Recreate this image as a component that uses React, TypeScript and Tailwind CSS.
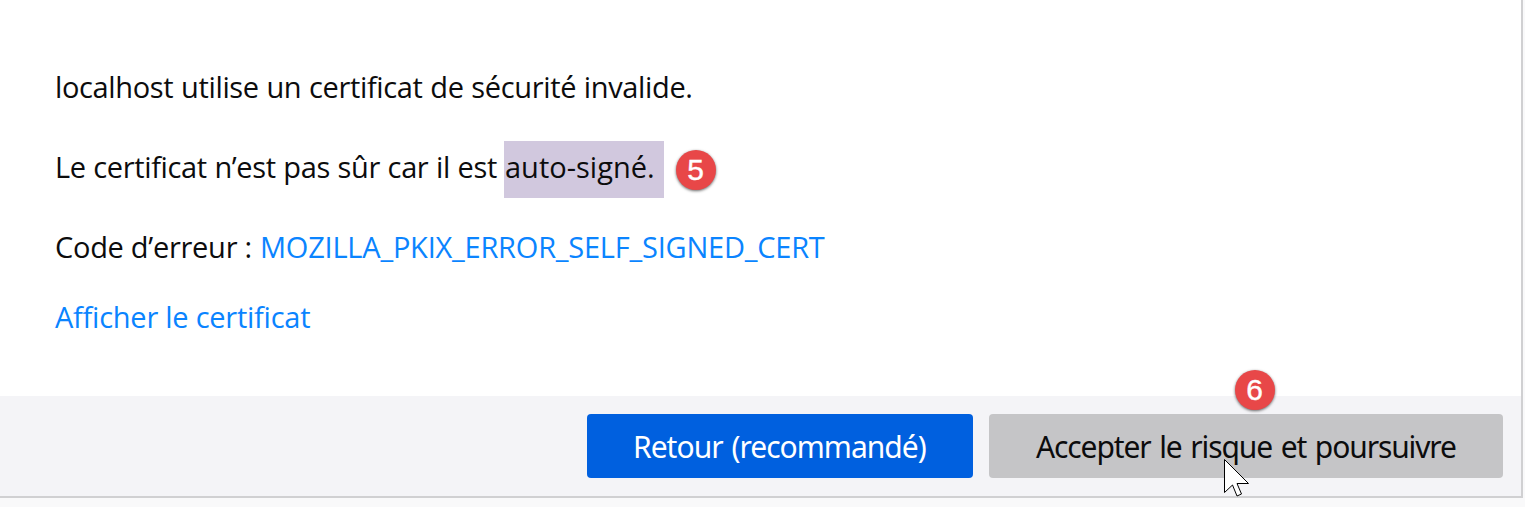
import type { ReactNode } from "react";

function Badge({ children, className }: { children: ReactNode; className: string }) {
  return (
    <span
      className={`absolute flex size-10 items-center justify-center rounded-full bg-[#e84748] pr-px font-['Liberation_Sans',sans-serif] text-[30px] leading-none tracking-normal text-white shadow-[0_1px_3px_rgba(0,0,0,0.6)] [-webkit-text-stroke:0.4px_white] ${className}`}
    >
      {children}
    </span>
  );
}

function Pointer() {
  return (
    <svg className="absolute left-[234px] top-[44px]" width="28" height="40" viewBox="0 0 28 40" aria-hidden="true">
      <path
        d="M1.5 1.5V34.5L9.5 27L14 38L18.500 36L14 25.500H25.500Z"
        fill="white"
        stroke="black"
        strokeWidth="1"
      />
    </svg>
  );
}

export default function App() {
  return (
    <div className="h-[507px] w-[1525px] overflow-hidden bg-[#f9f9fa] font-['Open_Sans','Noto_Sans',sans-serif] text-[29px] text-[#0c0c0d]">
      <main className="flex h-[498px] w-[1523px] flex-col border-b-2 border-r-2 border-[#d0d0d2] bg-white">
        <section className="flex h-[396px] flex-col whitespace-nowrap pl-[55px] pt-[58px] leading-[57px]">
          <p className="mb-[23px] tracking-[-0.35px] [word-spacing:0.5px]">localhost utilise un certificat de sécurité invalide.</p>
          <div className="mb-[23px] flex h-[57px]">
            <p className="w-[449px] tracking-[-0.37px] [word-spacing:0.5px]">Le certificat n’est pas sûr car il est</p>
            <p className="relative mt-[3px] h-[57px] w-[160px] bg-[#d1c8de] pl-px leading-[51px]">
              auto-signé.
              <Badge className="left-[172px] top-[9px]">5</Badge>
            </p>
          </div>
          <div className="mb-[13px] flex">
            <p className="w-[205px] tracking-[-0.28px]">Code d’erreur :</p>
            <a className="tracking-[-0.22px] text-[#0a84ff]">MOZILLA_PKIX_ERROR_SELF_SIGNED_CERT</a>
          </div>
          <a className="tracking-[-0.25px] text-[#0a84ff]">Afficher le certificat</a>
        </section>
        <footer className="flex h-[100px] justify-end gap-4 bg-[#f4f4f7] pr-[18px] pt-[18px] font-['Noto_Sans',sans-serif] text-[30px]">
          <button className="flex h-16 w-[386px] items-center whitespace-nowrap rounded bg-[#0060df] pl-[46px] tracking-[-0.98px] text-white [word-spacing:2px]">
            Retour (recommandé)
          </button>
          <button className="relative flex h-16 w-[514px] items-center whitespace-nowrap rounded bg-[#c5c5c7] pl-[47px] tracking-[-1.12px] [word-spacing:2px]">
            Accepter le risque et poursuivre
            <Badge className="left-[246px] top-[-44px]">6</Badge>
            <Pointer />
          </button>
        </footer>
      </main>
    </div>
  );
}
